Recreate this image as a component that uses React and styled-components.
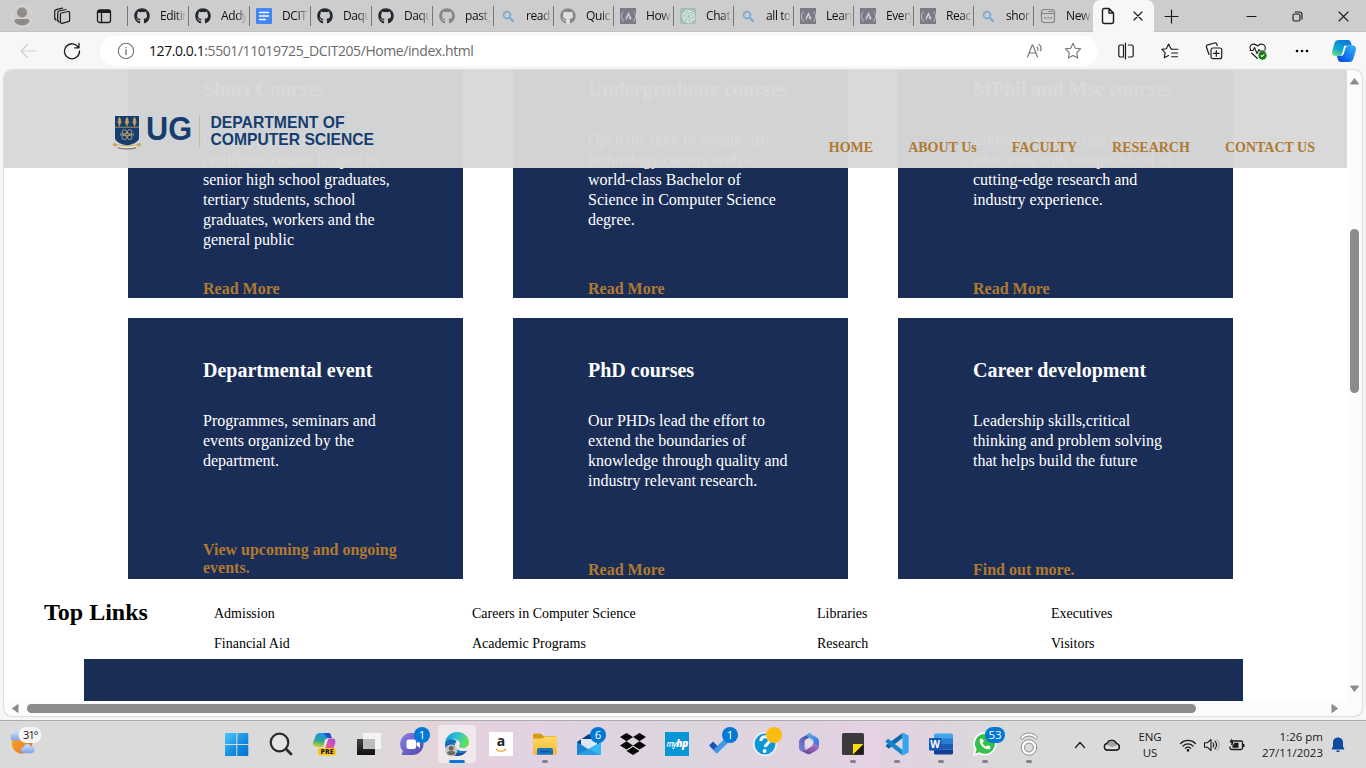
import React from "react";
import styled, { createGlobalStyle, css } from "styled-components";
import { FaGithub, FaDropbox, FaPhoneAlt, FaFreeCodeCamp } from "react-icons/fa";
import { SiOpenai } from "react-icons/si";

const uiFont = '"Open Sans", "Noto Sans", sans-serif';
const pageFont = '"Liberation Serif", "Times New Roman", serif';
const navy = "#1a2d57";
const gold = "#b07a30";

const GlobalStyle = createGlobalStyle`
  * { box-sizing: border-box; }
  body { margin: 0; overflow: hidden; background: #f7f7f7; }
`;

const Desktop = styled.div`
  width: 1366px;
  height: 768px;
  display: flex;
  flex-direction: column;
  overflow: hidden;
  background: #f7f7f7;
  font-family: ${uiFont};
`;

/* ---------- tab strip ---------- */
const TabStrip = styled.div`
  height: 32px;
  flex: none;
  display: flex;
  background: #cdcdcd;
  box-shadow: inset 0 -1px 0 #c2c2c2;
`;

const StripButton = styled.div`
  width: ${(p) => p.$w}px;
  height: 32px;
  flex: none;
  display: flex;
  align-items: center;
  justify-content: center;
`;

const Tab = styled.div`
  width: ${(p) => p.$w}px;
  height: 32px;
  flex: none;
  display: flex;
  align-items: center;
  padding-left: 6px;
  gap: 11px;
  &::before {
    content: "";
    width: 1px;
    height: 20px;
    margin-left: -6px;
    margin-right: -5px;
    background: #777;
  }
`;

const Favicon = styled.span`
  width: 16px;
  height: 16px;
  flex: none;
  display: flex;
  align-items: center;
  justify-content: center;
  border-radius: ${(p) => p.$radius || 0}px;
  background: ${(p) => p.$bg || "transparent"};
  color: ${(p) => p.$color || "#24292f"};
  svg { display: block; }
`;

const TabTitle = styled.span`
  width: 26px;
  margin-left: -1px;
  overflow: hidden;
  white-space: nowrap;
  font-size: 12px;
  line-height: 18px;
  letter-spacing: -0.4px;
  color: #111;
  mask-image: linear-gradient(90deg, #000 60%, transparent 100%);
`;

const ActiveTab = styled.div`
  width: 61px;
  height: 32px;
  flex: none;
  display: flex;
  align-items: center;
  padding-left: 7px;
  gap: 17px;
  background: #f7f7f7;
  border-radius: 7px 7px 0 0;
`;

const Spacer = styled.div`
  flex: 1;
`;

/* ---------- toolbar ---------- */
const Toolbar = styled.div`
  height: 38px;
  flex: none;
  display: flex;
  align-items: center;
  padding-left: 6px;
  background: #f7f7f7;
`;

const ToolCell = styled.div`
  width: ${(p) => p.$w || 44}px;
  height: 38px;
  flex: none;
  display: flex;
  align-items: center;
  justify-content: center;
`;

const AddressBar = styled.div`
  width: 998px;
  height: 30px;
  margin: 0 6px;
  flex: none;
  display: flex;
  align-items: center;
  padding: 0 16px 0 17px;
  border-radius: 15px;
  background: #fff;
`;

const Url = styled.span`
  margin-left: 14px;
  font-size: 14px;
  letter-spacing: -0.42px;
  line-height: 20px;
  white-space: nowrap;
  color: #6b6b6b;
  b { font-weight: 400; color: #111; }
`;

const AddressTools = styled.div`
  margin-left: auto;
  display: flex;
  align-items: center;
  gap: 20px;
`;

/* ---------- viewport ---------- */
const Frame = styled.div`
  width: 1358px;
  height: 646px;
  margin: 0 4px 4px;
  flex: none;
  display: grid;
  grid-template-columns: 1343px 15px;
  grid-template-rows: 631px 15px;
  border-radius: 8px;
  overflow: hidden;
  background: #fcfcfc;
`;

const FrameShadow = styled.div`
  width: 1366px;
  flex: none;
  & > div { box-shadow: 0 0 2px rgba(0, 0, 0, 0.35); }
`;

const Page = styled.div`
  position: relative;
  overflow: hidden;
  background: #fff;
  font-family: ${pageFont};
`;

const SiteHeader = styled.header`
  position: absolute;
  inset: 0 0 auto 0;
  height: 98px;
  display: flex;
  align-items: flex-start;
  justify-content: space-between;
  padding: 44px 32px 0 108px;
  background: rgba(216, 216, 216, 0.974);
`;

const Nav = styled.nav`
  display: flex;
  gap: 35px;
  padding-top: 26px;
`;

const NavLink = styled.a`
  font-size: 14px;
  line-height: 16px;
  font-weight: 700;
  color: ${gold};
`;

const CardGrid = styled.div`
  display: grid;
  grid-template-columns: repeat(3, 335px);
  grid-auto-rows: 261px;
  gap: 20px 50px;
  margin: -33px 0 0 124px;
`;

const Card = styled.article`
  display: flex;
  flex-direction: column;
  padding: 41px 40px ${(p) => p.$bottom || 0}px 75px;
  background: ${navy};
  color: #fff;
`;

const CardTitle = styled.h3`
  margin: 0;
  font-size: 20px;
  line-height: 22px;
  white-space: nowrap;
`;

const CardText = styled.p`
  margin: 30px 0 0;
  font-size: 16px;
  line-height: 20px;
  white-space: pre;
`;

const CardLink = styled.a`
  margin-top: auto;
  font-size: 16px;
  line-height: 18px;
  font-weight: 700;
  white-space: pre;
  color: ${gold};
`;

const TopLinks = styled.section`
  height: 80px;
  display: grid;
  grid-template-columns: 170px 258px 345px 234px 1fr;
  padding: 20px 0 0 40px;
`;

const TopTitle = styled.h2`
  margin: 0;
  font-size: 24px;
  line-height: 27px;
  color: #000;
`;

const LinkColumn = styled.div`
  display: flex;
  flex-direction: column;
  font-size: 14px;
  line-height: 30px;
  color: #000;
  white-space: nowrap;
`;

const NavyBand = styled.div`
  height: 42px;
  margin: 0 104px 0 80px;
  background: ${navy};
`;

const VBar = styled.div`
  display: flex;
  flex-direction: column;
  align-items: center;
  padding: 7px 0 8px;
`;

const HBar = styled.div`
  display: flex;
  align-items: center;
  padding: 0 8px 0 7px;
`;

const Thumb = styled.div`
  flex: none;
  border-radius: 5px;
  background: #8b8b8b;
  ${(p) =>
    p.$vertical
      ? css`width: 9px; height: 164px; margin: 144px 0 auto;`
      : css`height: 9px; width: 1169px; margin: 0 auto 0 8px;`}
`;

/* ---------- taskbar ---------- */
const Taskbar = styled.div`
  height: 48px;
  flex: none;
  display: flex;
  border-top: 1px solid #ababab;
  background: linear-gradient(90deg, #dadada 0, #dadada 360px, #e3d4d8 430px, #e3d1df 490px, #e2d2e3 540px, #dcd5de 680px, #e0d3e0 790px, #e5d1e4 870px, #ded5dd 940px, #dadada 1010px);
`;

const WeatherArea = styled.div`
  width: 215px;
  padding: 6px 0 0 9px;
`;

const AppCell = styled.div`
  position: relative;
  width: 44px;
  height: 47px;
  flex: none;
  display: flex;
  align-items: center;
  justify-content: center;
`;

const AppTile = styled.div`
  width: 38px;
  height: 38px;
  margin-top: -1px;
  display: flex;
  align-items: center;
  justify-content: center;
  border-radius: 4px;
  background: ${(p) => (p.$active ? "#f1e8ee" : "transparent")};
`;

const RunMark = styled.i`
  position: absolute;
  bottom: 5px;
  left: 50%;
  transform: translateX(-50%);
  height: 3px;
  border-radius: 2px;
  width: ${(p) => (p.$active ? 16 : 6)}px;
  background: ${(p) => (p.$active ? "#0a78d4" : "#85808a")};
`;

const Badge = styled.span`
  position: absolute;
  top: 6px;
  right: ${(p) => (p.$wide ? 2 : 5)}px;
  min-width: ${(p) => (p.$wide ? 20 : 16)}px;
  height: 16px;
  border-radius: 8px;
  background: ${(p) => p.$bg || "#0078d4"};
  color: #fff;
  font-size: 11.5px;
  line-height: 16px;
  text-align: center;
`;

const Tray = styled.div`
  flex: 1;
  display: flex;
  align-items: center;
  color: #1b1b1b;
`;

const TrayCell = styled.div`
  width: ${(p) => p.$w}px;
  flex: none;
  display: flex;
  justify-content: center;
`;

const TrayText = styled.div`
  width: ${(p) => p.$w}px;
  flex: none;
  font-size: 11.5px;
  line-height: 16px;
  letter-spacing: ${(p) => p.$ls || 0}px;
  text-align: ${(p) => p.$align || "center"};
  white-space: pre;
`;

/* ---------- drawings ---------- */
const Line = ({ w = 18, h = w, vb, stroke = "#1b1b1b", sw = 1.2, children }) => (
  <svg width={w} height={h} viewBox={vb || `0 0 ${w} ${h}`} fill="none" stroke={stroke} strokeWidth={sw} strokeLinecap="round" strokeLinejoin="round">
    {children}
  </svg>
);

const SearchFav = () => (
  <Line w={16} stroke="#78a9d6" sw={1.6}>
    <circle cx="7" cy="7" r="3.4" />
    <path d="M9.7 9.7 13 13" strokeWidth="2" />
  </Line>
);

const DocFav = () => (
  <Line w={16} stroke="#fff" sw={1.5}>
    <path d="M3 4.5h10M3 8h10M3 11.5h7" strokeLinecap="butt" />
  </Line>
);

const NewFav = () => (
  <Line w={16} stroke="#848484" sw={1.2}>
    <rect x="1.5" y="1.5" width="13" height="13" rx="2.5" />
    <path d="M1.5 5.500h13M8.500 3.500h4" />
    <path d="M5 9.8h.2M8 9.8h.2M11 9.8h.2" strokeWidth="1.8" />
  </Line>
);

const Profile = () => (
  <svg width="22" height="22" viewBox="0 0 22 22">
    <circle cx="11" cy="11" r="10.5" fill="#d0cdc9" stroke="#dcd9d5" />
    <circle cx="11" cy="7.500" r="5" fill="#8f8b88" />
    <path d="M3.500 16.500C3.500 14.500 5 14 6.500 14h9c1.500 0 3 .5 3 2.500C17 19 14 20.500 11 20.500S5 19 3.500 16.500z" fill="#8f8b88" />
  </svg>
);

const Workspaces = () => (
  <Line w={18} sw={1.200}>
    <path d="M8.500 6 15 4.500a1.300 1.300 0 0 1 1.600 1.300v7.400a1.500 1.500 0 0 1-1.200 1.500L9 16.300a1.300 1.300 0 0 1-1.600-1.300V7.500A1.500 1.500 0 0 1 8.500 6z" />
    <path d="M4.700 13.500V6a2 2 0 0 1 1.600-2l6.700-1.500" />
    <path d="M1.700 11.500V4.600a2 2 0 0 1 1.600-2L9.500 1.200" />
    <path d="M1.700 11.500 3 13M4.700 13.500 6 15" />
  </Line>
);

const TabActions = () => (
  <Line w={16} sw={1.3}>
    <rect x="1.500" y="2" width="13" height="12.500" rx="2" />
    <path d="M2 3.500h12" strokeWidth="3" strokeLinecap="butt" />
    <path d="M5.500 5v9" />
  </Line>
);

const PageIcon = () => (
  <Line w={16} h={18} sw={1.400}>
    <path d="M4 1.500h5L13.500 6v8.500a2 2 0 0 1-2 2H4.500a2 2 0 0 1-2-2V3a1.500 1.500 0 0 1 1.500-1.500zM9 1.800V6h4.300" />
  </Line>
);

const Star = ({ lines }) => (
  <Line w={18} stroke={lines ? "#1b1b1b" : "#757575"} sw={1.100}>
    {lines ? (
      <>
        <path d="M11 7 10 6.800 7.600 2 5.300 6.700.8 7.400 4.200 10.700 3.200 15.800 7.600 13.500" />
        <path d="M10.500 7.200h6.500M10.600 11h6M10.600 14.800h6" />
      </>
    ) : (
      <path d="m9 1.300 2.300 4.900 5.300.700-3.900 3.700 1 5.400L9 13.400 4.300 16l1-5.400L1.400 6.900l5.300-.700z" />
    )}
  </Line>
);

const CopilotBlue = () => (
  <svg width="26" height="26" viewBox="0 0 26 26">
    <defs>
      <linearGradient id="cbA" x1="0" y1="1" x2=".6" y2="0"><stop offset="0" stopColor="#7be28a" /><stop offset=".45" stopColor="#12a9c6" /><stop offset="1" stopColor="#0a79dd" /></linearGradient>
      <linearGradient id="cbB" x1="0" y1="1" x2="1" y2="0"><stop offset="0" stopColor="#0a3fe0" /><stop offset=".5" stopColor="#147ef0" /><stop offset="1" stopColor="#38b5f5" /></linearGradient>
    </defs>
    <path d="M18 24H10c-2 0-2.800-1.500-3.200-3l-.9-3.100h3.500c2 0 3-1 3.600-2.800l1.500-5.200c.5-1.500 1.500-2.400 3-2.400h4.300c3 0 3.700 2.600 2.900 5.600l-2.300 7.400C21.800 23 20.500 24 18 24z" fill="url(#cbB)" />
    <path d="M8 2h9c2 0 2.600 1.500 3 3l.8 2.500h-3.300c-2 0-3 1-3.600 2.800l-1.500 5.200c-.5 1.500-1.500 2.400-3 2.400H4.500C1 17.900.7 15 1.500 12l2-7C4.200 3 5.500 2 8 2z" fill="url(#cbA)" />
    <path d="M13 7.800h3.600c-1.500.4-2 1.200-2.500 2.700L12.600 15.600c-.5 1.500-1.200 2.200-2.400 2.300H9c1.200-.3 1.700-1.300 2.100-2.500l1.400-5c.3-1 .4-1.800.5-2.600z" fill="#fff" />
  </svg>
);

const Logo = () => (
  <svg width="266" height="38" viewBox="0 0 266 38">
    <path d="M3 2h24v22c0 4-7 6.500-12 7.500C10 30.500 3 28 3 24z" fill="#153d70" />
    <path d="M3 13.200h24" stroke="#b5975a" strokeWidth=".9" />
    <g fill="#c4a15a">
      <path d="m7.500 2.800 1.700 3-.6.200 1.300 2.400-1.400.4.600 1.700H8v2H7v-2H5.900l.6-1.700-1.400-.4L6.400 6l-.6-.2zM15 2.800l1.700 3-.6.200 1.300 2.400-1.400.4.600 1.700h-1.100v2h-1v-2h-1.100l.6-1.700-1.400-.4L13.900 6l-.6-.2zM22.500 2.800l1.700 3-.6.200 1.300 2.400-1.400.4.600 1.700H23v2h-1v-2h-1.100l.6-1.700-1.400-.4L21.400 6l-.6-.2z" />
    </g>
    <g fill="none" stroke="#a99a74" strokeWidth="1">
      <circle cx="12.300" cy="18" r="2.300" /><circle cx="17.700" cy="18" r="2.300" />
      <circle cx="12.300" cy="23.300" r="2.300" /><circle cx="17.700" cy="23.300" r="2.300" />
      <path d="M8 21.500c3.500-2.500 10.500-2.500 14 0M8 19.500c3.500 3 10.500 3 14 0" />
    </g>
    <path d="M1.500 29.500c4 4.500 23 4.500 27 0" fill="none" stroke="#c6a76a" strokeWidth="3" />
    <path d="M5 32c5 2.200 15 2.200 20 0" fill="none" stroke="#eee5d3" strokeWidth="2.200" />
    <path d="M6 33.700c5 1.700 13 1.700 18 0" fill="none" stroke="#5f5f60" strokeWidth="1" />
    <g fill="#153d70" fontFamily='"Liberation Sans", Arial, sans-serif' fontWeight="700">
      <text x="34" y="26" fontSize="34" textLength="46" lengthAdjust="spacingAndGlyphs">UG</text>
      <text x="98.500" y="14" fontSize="16.500" textLength="134" lengthAdjust="spacingAndGlyphs">DEPARTMENT OF</text>
      <text x="98.500" y="31" fontSize="16.500" textLength="163.500" lengthAdjust="spacingAndGlyphs">COMPUTER SCIENCE</text>
    </g>
    <path d="M87.500 1v32" stroke="#cbbd97" strokeWidth="1" />
  </svg>
);

const ArrowSvg = styled.svg`
  flex: none;
`;

const Arrow = ({ d, w, h }) => (
  <ArrowSvg width={w} height={h} viewBox={`0 0 ${w} ${h}`}>
    <path d={d} fill="#8b8b8b" stroke="#8b8b8b" strokeLinejoin="round" />
  </ArrowSvg>
);

const Weather = () => (
  <svg width="34" height="32" viewBox="0 0 34 32">
    <defs>
      <linearGradient id="sun" x1="0" y1="0" x2="1" y2="1"><stop offset="0" stopColor="#f9b22c" /><stop offset="1" stopColor="#ea6a14" /></linearGradient>
      <linearGradient id="cloud" x1="0" y1="0" x2="0" y2="1"><stop offset="0" stopColor="#d3e2fa" /><stop offset="1" stopColor="#82a5e4" /></linearGradient>
    </defs>
    <circle cx="13" cy="16.500" r="10.300" fill="url(#sun)" />
    <path d="M4.500 13.500a3.500 3.500 0 0 1-.3-6.900 5 5 0 0 1 9.600.4v6.500z" fill="url(#cloud)" />
    <path d="M14.500 26a3.200 3.200 0 0 1-.2-6.300 4.300 4.300 0 0 1 8-.2 3.300 3.300 0 0 1 .3 6.500z" fill="url(#cloud)" stroke="#86a6dc" strokeWidth=".5" />
    <rect x="9.500" y="0" width="23" height="16" rx="8" fill="#f5f5f5" />
    <text x="14" y="12" fontSize="11" letterSpacing="-.9" fill="#222">31°</text>
  </svg>
);

const Windows = () => (
  <svg width="24" height="24" viewBox="0 0 24 24">
    <defs><linearGradient id="win" x1="0" y1="0" x2="1" y2="1"><stop offset="0" stopColor="#4cc8fa" /><stop offset=".6" stopColor="#1189de" /><stop offset="1" stopColor="#0273d0" /></linearGradient></defs>
    <path d="M0 1h11.300v11H0zM12.300 1h11v11h-11zM0 13h11.300v11H0zM12.300 13h11v11h-11z" fill="url(#win)" />
  </svg>
);

const SearchApp = () => (
  <Line w={24} stroke="#2b2b2b" sw={2.200}>
    <circle cx="10.500" cy="10.500" r="8.800" fill="#e4e4e4" />
    <path d="m17 17 5 5" strokeWidth="2.800" />
  </Line>
);

const CopilotPre = () => (
  <svg width="26" height="26" viewBox="0 0 26 26">
    <defs>
      <linearGradient id="cpA" x1=".4" y1="0" x2=".2" y2="1"><stop offset="0" stopColor="#1b8ff0" /><stop offset=".55" stopColor="#2aa88e" /><stop offset="1" stopColor="#e3d22f" /></linearGradient>
      <linearGradient id="cpB" x1="1" y1="0" x2="0" y2="1"><stop offset="0" stopColor="#a24de6" /><stop offset=".6" stopColor="#ea5496" /><stop offset="1" stopColor="#fba44c" /></linearGradient>
    </defs>
    <path d="M8 2h8c2.500 0 3 2 3.600 5H16c-1.500 0-2 1-2.500 2.300L11.500 16H5c-4 0-4.600-3-3.600-5.500l2.200-5.600C4.400 3 5.500 2 8 2z" fill="url(#cpA)" />
    <path d="M12 2h4.500c2 0 2.600 2 3.100 5h-3.200c-1.500 0-3-2-4.400-5z" fill="#1c54c9" />
    <path d="M16.500 7.500H20c3.500 0 4 2.500 3 5.500l-2.500 7H9l3.500-2c1-1.200 1.200-3 1.700-4.500z" fill="url(#cpB)" />
    <path d="M13 8.500h2.500L13.500 16h-2z" fill="#e6e3ea" />
    <rect x="6" y="17" width="18" height="7.500" rx="2" fill="#fcc419" />
    <text x="15" y="23.300" fontSize="7" fontWeight="800" textAnchor="middle" fill="#222">PRE</text>
  </svg>
);

const TaskView = () => (
  <svg width="26" height="24" viewBox="0 0 26 24">
    <defs><linearGradient id="tv" x1="0" y1="0" x2="0" y2="1"><stop offset="0" stopColor="#454545" /><stop offset="1" stopColor="#101010" /></linearGradient></defs>
    <path d="M1 7h18v16H1z" fill="url(#tv)" />
    <path d="M7 1h18v16H7z" fill="#f4f4f4" />
    <path d="M7 7h12v10H7z" fill="#bdbdbd" />
  </svg>
);

const Chat = () => (
  <svg width="26" height="26" viewBox="0 0 26 26">
    <defs><linearGradient id="ch" x1="0" y1="0" x2="1" y2="1"><stop offset="0" stopColor="#8a83e0" /><stop offset="1" stopColor="#4b46b0" /></linearGradient></defs>
    <path d="M12.500 2A11 11 0 0 1 12.500 24H2.500c-1 0-1-1-.5-1.800l1-2A11 11 0 0 1 12.500 2z" fill="url(#ch)" />
    <rect x="6.500" y="8.500" width="9.500" height="9.500" rx="2" fill="#fff" />
    <path d="m16.500 12 3.500-2.500v7.500L16.500 14.500z" fill="#fff" />
  </svg>
);

const Edge = () => (
  <svg width="26" height="26" viewBox="0 0 26 26">
    <defs>
      <linearGradient id="eg1" x1="0" y1="0" x2="1" y2=".3"><stop offset="0" stopColor="#1693dc" /><stop offset=".5" stopColor="#2ac2d6" /><stop offset="1" stopColor="#66dd5a" /></linearGradient>
      <linearGradient id="eg2" x1="0" y1="0" x2="1" y2="1"><stop offset="0" stopColor="#1379c8" /><stop offset="1" stopColor="#123f91" /></linearGradient>
    </defs>
    <path d="M1 12C2 5 7 1 13 1c7 0 12 5 12 10 0 4-3 6-6.500 6-3 0-4-1-3.300-2.200.8-1.300 1-2.300.6-3.300-2-4.500-11-4.500-14.800.5z" fill="url(#eg1)" />
    <path d="M1 13c0 7 5 12 12 12 4 0 8-2 10-5-4 2-10 1.500-12.300-2C9 15.500 10 12.500 12.500 10 8 7 1.500 8 1 13z" fill="url(#eg2)" />
    <path d="M12.800 10.300c-2.500 2.500-2.600 6.200.5 8.200 3.200 2 7 1.600 9.700 1.300-2 2-5 2.500-8 2.200-5-.7-8.500-4.500-7-8.500.8-2 2.800-3 4.800-3.200z" fill="#1b83cc" />
    <circle cx="7.200" cy="19.500" r="6" fill="#c9c5c3" />
    <circle cx="7.200" cy="17.300" r="2.500" fill="#6c6865" />
    <path d="M3.200 22.500c0-2 1-2.600 4-2.600s4 .6 4 2.600c-1.500 2-6.500 2-8 0z" fill="#6c6865" />
  </svg>
);

const AmazonTile = styled.div`
  width: 24px;
  height: 24px;
  display: flex;
  flex-direction: column;
  align-items: center;
  background: #fff;
  color: #222;
  font-weight: 700;
  font-size: 14px;
  line-height: 18px;
  svg { margin-top: -2px; }
`;

const Explorer = () => (
  <svg width="26" height="26" viewBox="0 0 26 26">
    <defs><linearGradient id="ex" x1="0" y1="0" x2="0" y2="1"><stop offset="0" stopColor="#fdd966" /><stop offset="1" stopColor="#f6b82c" /></linearGradient></defs>
    <path d="M1 4a1.500 1.500 0 0 1 1.500-1.500h6L11.500 5h12A1.500 1.500 0 0 1 25 6.500V12H1z" fill="#d99b13" />
    <path d="M1 7.500h9.500l2-2h12.500V22a1.700 1.700 0 0 1-1.700 1.700H2.700A1.700 1.700 0 0 1 1 22z" fill="url(#ex)" />
    <path d="M5 23.700V19a2 2 0 0 1 2-2h12a2 2 0 0 1 2 2v4.700z" fill="#1373c4" />
    <path d="M8.500 20.500h9" stroke="#0c4f94" strokeWidth="1.300" />
  </svg>
);

const Mail = () => (
  <svg width="26" height="26" viewBox="0 0 26 26">
    <path d="M1 11 13 3l12 8v3H1z" fill="#0c3f7e" />
    <path d="M5 8h16v7l-8 4-8-4z" fill="#d9e8f5" />
    <path d="M1 11v13h24V11l-12 8z" fill="#1b8fdf" />
    <path d="M1 24 25 11v13z" fill="#38b8f3" />
    <path d="m1 11 11.500 7L25 24H1z" fill="#1473c9" opacity=".4" />
  </svg>
);

const HpTile = styled.div`
  width: 24px;
  height: 24px;
  background: #0a96d6;
  color: #fff;
  font-size: 8px;
  font-style: italic;
  font-weight: 600;
  line-height: 22px;
  letter-spacing: -0.7px;
  text-align: center;
  white-space: nowrap;
  b { font-size: 10.5px; }
`;

const Todo = () => (
  <svg width="26" height="26" viewBox="0 0 26 26">
    <path d="m1 14.500 4-4L12.500 18l-3.700 4.500z" fill="#1a56b4" />
    <path d="M8.800 22.500 5.300 19 19 5.200l3.800 4z" fill="#3f9be8" />
  </svg>
);

const Help = () => (
  <svg width="26" height="26" viewBox="0 0 26 26">
    <circle cx="13" cy="13" r="11.200" fill="#0c98d6" stroke="#f3f3f3" strokeWidth="1.500" />
    <path d="M8.800 10c.2-6 9.200-5.500 8.500 0-.4 3-3.300 2.500-4.200 6" fill="none" stroke="#fff" strokeWidth="3" />
    <circle cx="12.600" cy="20" r="1.900" fill="#fff" />
  </svg>
);

const M365 = () => (
  <svg width="24" height="26" viewBox="0 0 24 26">
    <defs>
      <linearGradient id="m1" x1="0" y1="1" x2="1" y2="0"><stop offset="0" stopColor="#8187dd" /><stop offset="1" stopColor="#393f91" /></linearGradient>
      <linearGradient id="m2" x1="0" y1="0" x2="1" y2="1"><stop offset="0" stopColor="#53b3ec" /><stop offset="1" stopColor="#4069dc" /></linearGradient>
      <linearGradient id="m3" x1="0" y1="1" x2="1" y2="0"><stop offset="0" stopColor="#563b84" /><stop offset="1" stopColor="#bb7ad5" /></linearGradient>
    </defs>
    <path d="M13.500 2 5 6.500C3 7.500 2 9 2 11v6c0 3 3 4.500 5.500 3L9 19c-1-.8-1.500-2-1.500-3v-5c0-1.500.5-2.300 2-3l4-2z" fill="url(#m1)" />
    <path d="M12 2.300 19 6c2 1 3 2.500 3 4.500v6L16.500 14v-3c0-1.500-.7-2.300-2-3L10 5.500c-.5-2 .6-3 2-3.200z" fill="url(#m2)" />
    <path d="M22 14.500c0 3-.8 4-3 5.200l-5 2.900c-1.500.9-3 .8-4.500 0L3.500 19.500c2 1.200 4 .5 5.500-.5l5-3.500 2.500-3z" fill="url(#m3)" />
    <path d="M8.500 10.500 12 8.300l3.500 2.200v4L12 17l-3.500-2.500z" fill="#e6dde9" />
  </svg>
);

const Sticky = () => (
  <svg width="22" height="22" viewBox="0 0 22 22">
    <rect width="22" height="22" rx="1.500" fill="#3a3a3a" />
    <path d="M11 11h10.500L11 21.500z" fill="#fcdc0b" />
    <path d="M11.500 21.500 21.500 11.500V21.500z" fill="#1d1d1d" />
  </svg>
);

const VsCode = () => (
  <svg width="24" height="24" viewBox="0 0 24 24">
    <path d="M17.500 5.500 3.900 16.300 1.100 14a1 1 0 0 1 0-1.500L17.500.4z" fill="#0c69ae" transform="translate(0 .5)" />
    <path d="M17.500 18 4 7.300a1.200 1.200 0 0 0-1.500 0L1 8.600a1 1 0 0 0 0 1.600l16.500 13.400z" fill="#1585cc" />
    <path d="M17.500.4 22.700 2.900c.8.400 1 .8 1 1.500v15.200c0 .7-.2 1.100-1 1.500l-5.200 2.500z" fill="#33a5ef" />
  </svg>
);

const Word = () => (
  <svg width="26" height="24" viewBox="0 0 26 24">
    <path d="M7 1.500h16.500A1.500 1.500 0 0 1 25 3v4H6V3z" fill="#41a5ee" />
    <path d="M6 6.500h19V12H6z" fill="#2b7cd3" />
    <path d="M6 12h19v5.500H6z" fill="#185abd" />
    <path d="M6 17.500h19V21a1.500 1.500 0 0 1-1.500 1.500H7.500A1.500 1.500 0 0 1 6 21z" fill="#103f91" />
    <rect x="1" y="6" width="12.500" height="12.500" rx="1" fill="#1857b6" />
    <text x="7.200" y="16" fontSize="10" fontWeight="700" textAnchor="middle" fill="#fff">W</text>
  </svg>
);

const WhatsBubble = () => (
  <svg width="26" height="26" viewBox="0 0 26 26">
    <path d="M13 2a10.800 10.800 0 1 1-5.300 20.200L2 24l1.700-5.500A10.800 10.800 0 0 1 13 2z" fill="#35c04a" stroke="#fafafa" strokeWidth="1.800" strokeLinejoin="round" />
    <g transform="translate(7.500 7.500)" color="#fff"><FaPhoneAlt size={11} /></g>
  </svg>
);

const Phone = () => (
  <Line w={24} stroke="#8b8b8b" sw={1}>
    <circle cx="12" cy="15.500" r="7.800" fill="#fff" />
    <circle cx="12" cy="15.500" r="4.500" fill="#dadada" />
    <path d="M3.500 5.500C7-.5 17-.5 20.500 5.500L18.500 7c-3-4-10-4-13 0z" fill="#fff" />
  </Line>
);

const apps = [
  { icon: <Windows /> },
  { icon: <SearchApp /> },
  { icon: <CopilotPre /> },
  { icon: <TaskView /> },
  { icon: <Chat />, badge: "1" },
  { icon: <Edge />, active: true, run: true },
  {
    icon: (
      <AmazonTile>
        a
        <svg width="12" height="5" viewBox="0 0 12 5"><path d="M1 1c3 3 7 3 10 0" fill="none" stroke="#f59b23" strokeWidth="1.500" /></svg>
      </AmazonTile>
    ),
  },
  { icon: <Explorer />, run: true },
  { icon: <Mail />, badge: "6" },
  { icon: <FaDropbox size={26} color="#050505" /> },
  { icon: <HpTile>my<b>hp</b></HpTile> },
  { icon: <Todo />, badge: "1" },
  { icon: <Help />, badge: "", badgeBg: "#fdbd10" },
  { icon: <M365 /> },
  { icon: <Sticky />, run: true },
  { icon: <VsCode />, run: true },
  { icon: <Word />, run: true },
  { icon: <WhatsBubble />, badge: "53", wide: true, run: true },
  { icon: <Phone />, run: true },
];

const gh = (color, bg) => <Favicon $color={color} $bg={bg} $radius={8}><FaGithub size={16} /></Favicon>;
const search = <Favicon><SearchFav /></Favicon>;
const fcc = <Favicon $bg="#7b7b87" $color="#d0d0d4"><FaFreeCodeCamp size={15} /></Favicon>;

const tabs = [
  [61, gh(), "Editing"],
  [61, gh(), "Addy"],
  [61, <Favicon $bg="#4386f5" $radius={1}><DocFav /></Favicon>, "DCIT"],
  [61, gh(), "Daqu"],
  [61, gh(), "Daqu"],
  [61, gh("#858789"), "past_"],
  [60, search, "read"],
  [60, gh("#858789", "#e0e0e0"), "Quic"],
  [60, fcc, "How"],
  [60, <Favicon $bg="#a3c0b6" $color="#eef2f0" $radius={2}><SiOpenai size={13} /></Favicon>, "Chat"],
  [60, search, "all to"],
  [60, fcc, "Learn"],
  [60, fcc, "Every"],
  [60, fcc, "React"],
  [60, search, "shor"],
  [60, <Favicon><NewFav /></Favicon>, "New"],
];

const cards = [
  ["Short Courses", "Our eight weeks\ncertificate course is open to\nsenior high school graduates,\ntertiary students, school\ngraduates, workers and the\ngeneral public", "Read More"],
  ["Undergraduate courses", "Open the door to sought-after\ntechnology careers with a\nworld-class Bachelor of\nScience in Computer Science\ndegree.", "Read More"],
  ["MPhil and Msc courses", "Embrace world class graduate\neducation with unique blend of\ncutting-edge research and\nindustry experience.", "Read More"],
  ["Departmental event", "Programmes, seminars and\nevents organized by the\ndepartment.", "View upcoming and ongoing\nevents."],
  ["PhD courses", "Our PHDs lead the effort to\nextend the boundaries of\nknowledge through quality and\nindustry relevant research.", "Read More"],
  ["Career development", "Leadership skills,critical\nthinking and problem solving\nthat helps build the future", "Find out more."],
];

const linkColumns = [
  ["Admission", "Financial Aid"],
  ["Careers in Computer Science", "Academic Programs"],
  ["Libraries", "Research"],
  ["Executives", "Visitors"],
];

function BrowserTabs() {
  return (
    <TabStrip>
      <StripButton $w={44}><Profile /></StripButton>
      <StripButton $w={36}><Workspaces /></StripButton>
      <StripButton $w={47}><TabActions /></StripButton>
      {tabs.map(([w, icon, title], i) => (
        <Tab key={i} $w={w}>{icon}<TabTitle>{title}</TabTitle></Tab>
      ))}
      <ActiveTab>
        <PageIcon />
        <Line w={10}><path d="m1 1 8 8M9 1 1 9" /></Line>
      </ActiveTab>
      <StripButton $w={34}><Line w={15} sw={1.200}><path d="M7.500 1v13M1 7.500h13" /></Line></StripButton>
      <Spacer />
      <StripButton $w={46}><Line w={11}><path d="M1 5.500h9" /></Line></StripButton>
      <StripButton $w={46}>
        <Line w={11} sw={1.100}><rect x="1" y="3" width="7" height="7" rx="1.500" /><path d="M3.200 1h4.300a2.500 2.500 0 0 1 2.500 2.500V8" /></Line>
      </StripButton>
      <StripButton $w={46}><Line w={11} sw={1.100}><path d="m1 1 9 9M10 1l-9 9" /></Line></StripButton>
    </TabStrip>
  );
}

function BrowserToolbar() {
  return (
    <Toolbar>
      <ToolCell><Line w={18} stroke="#cfcfcf"><path d="M17 9H2M8.500 2.500 2 9l6.500 6.500" /></Line></ToolCell>
      <ToolCell><Line w={18} sw={1.300}><path d="M15.500 5.500A7.500 7.500 0 1 0 16.500 9M16 1.500v4.300h-4.300" /></Line></ToolCell>
      <AddressBar>
        <Line w={18} stroke="#757575" sw={1.100}><circle cx="9" cy="9" r="7.700" /><path d="M9 8v4.500M9 5.500v.2" strokeWidth="1.400" /></Line>
        <Url><b>127.0.0.1</b>:5501/11019725_DCIT205/Home/index.html</Url>
        <AddressTools>
          <Line w={18} stroke="#757575" sw={1.200}><path d="m1.500 15 4.700-12h.6L11.500 15M3 11h7M11 5c1 .8 1.200 2 .9 3.300M13 2.600c2.200 1.600 2.500 4 1.600 6.200" /></Line>
          <Star />
        </AddressTools>
      </AddressBar>
      <ToolCell><Line w={18} sw={1.200}><path d="M6.500 3H3.500A1.700 1.700 0 0 0 1.800 4.700v8.600A1.700 1.700 0 0 0 3.500 15h3M11.500 3h3a1.700 1.700 0 0 1 1.700 1.700v8.600a1.700 1.700 0 0 1-1.700 1.700h-3M6.500 3v12M11.500 3v0M8.500 1v16" /></Line></ToolCell>
      <ToolCell><Star lines /></ToolCell>
      <ToolCell>
        <Line w={18} sw={1.200}>
          <rect x="6" y="6" width="10.700" height="10.700" rx="2" />
          <path d="M11.300 8.500v5.700M8.500 11.300h5.700M4 12.500 1.500 5.200A2 2 0 0 1 2.800 2.800L9.500 1a2 2 0 0 1 2.400 1.400l.3 1.200" />
        </Line>
      </ToolCell>
      <ToolCell>
        <Line w={20} h={18} sw={1.100}>
          <path d="M2.500 7.500C.5 2.500 6 .5 9.500 4 13 .5 18.500 2.500 17 7.500M2 8.500h3l1.500-3 2.500 6 2-4 1 1.500h5M3.500 11l6 5.500" />
          <circle cx="14.500" cy="13.500" r="3.600" fill="#107c10" stroke="#107c10" />
          <path d="m13 13.700 1 1 2-2.200" stroke="#fff" />
        </Line>
      </ToolCell>
      <ToolCell>
        <svg width="14" height="4" viewBox="0 0 14 4"><circle cx="2" cy="2" r="1.300" /><circle cx="7" cy="2" r="1.300" /><circle cx="12" cy="2" r="1.300" /></svg>
      </ToolCell>
      <ToolCell $w={40}><CopilotBlue /></ToolCell>
    </Toolbar>
  );
}

function SitePage() {
  return (
    <Page>
      <CardGrid>
        {cards.map(([title, text, link]) => (
          <Card key={title} $bottom={link.includes("\n") ? 2 : 0}>
            <CardTitle>{title}</CardTitle>
            <CardText>{text}</CardText>
            <CardLink>{link}</CardLink>
          </Card>
        ))}
      </CardGrid>
      <TopLinks>
        <TopTitle>Top Links</TopTitle>
        {linkColumns.map((col) => (
          <LinkColumn key={col[0]}>{col.map((t) => <span key={t}>{t}</span>)}</LinkColumn>
        ))}
      </TopLinks>
      <NavyBand />
      <SiteHeader>
        <Logo />
        <Nav>
          {["HOME", "ABOUT Us", "FACULTY", "RESEARCH", "CONTACT US"].map((t) => <NavLink key={t}>{t}</NavLink>)}
        </Nav>
      </SiteHeader>
    </Page>
  );
}

const TraySvg = styled.svg`
  flex: none;
`;

function SystemTray() {
  return (
    <Tray>
      <TrayCell $w={58}><Line w={12} h={8} sw={1.300}><path d="m1.500 6.500 4.500-5 4.500 5" /></Line></TrayCell>
      <TrayCell $w={6}>
        <TraySvg width="18" height="14" viewBox="0 0 18 14">
          <path d="M4.500 12.200a3.500 3.500 0 0 1-.4-6.900 5 5 0 0 1 9.300.2 3.400 3.400 0 0 1 .2 6.700z" fill="#dedede" stroke="#1b1b1b" strokeWidth="1.200" />
          <path d="M2.500 6.500a5.500 5.500 0 0 1 10.500-1L15 7 9 9z" fill="#a2a2a2" />
          <path d="M4.500 12.200a3.500 3.500 0 0 1-.4-6.900 5 5 0 0 1 9.300.2 3.400 3.400 0 0 1 .2 6.700z" fill="none" stroke="#1b1b1b" strokeWidth="1.200" />
        </TraySvg>
      </TrayCell>
      <TrayText $w={70} $ls={-0.1}>{"ENG\nUS"}</TrayText>
      <TrayCell $w={6}>
        <TraySvg width="18" height="14" viewBox="0 0 18 14" fill="none" stroke="#1b1b1b" strokeWidth="1.200" strokeLinecap="round">
          <path d="M1.500 5.500a10.500 10.500 0 0 1 15 0M4 8a7 7 0 0 1 10 0M6.300 10.300a3.800 3.800 0 0 1 5.400 0" />
          <circle cx="9" cy="12.300" r=".8" fill="#1b1b1b" />
        </TraySvg>
      </TrayCell>
      <TrayCell $w={41}>
        <Line w={17} h={14} sw={1.100}>
          <path d="M1.500 4.800h2.700L8 1.500v11L4.200 9.200H1.500zM10 5c.8 1 .8 3 0 4M12 3.200c1.800 2.200 1.800 5.400 0 7.600" />
          <path d="M14.200 1.500c2.600 3 2.600 8 0 11" stroke="#aaa" />
        </Line>
      </TrayCell>
      <TrayCell $w={9}>
        <TraySvg width="18" height="14" viewBox="0 0 18 14">
          <path d="M6 3h7a1.500 1.500 0 0 1 1.500 1.500v5.500a1.500 1.500 0 0 1-1.500 1.500H3.500A1.500 1.500 0 0 1 2 10V8.500M15.800 6v3" fill="none" stroke="#1b1b1b" strokeWidth="1.300" />
          <path d="M6.500 4.800h4v5h-6V8zM3.500 0v2H6L4.500 7.500 3 7l.5-2.500H1.500z" fill="#1b1b1b" />
        </TraySvg>
      </TrayCell>
      <TrayText $w={82} $align="right">{"1:26 pm\n27/11/2023"}</TrayText>
      <TrayCell $w={30}>
        <svg width="14" height="16" viewBox="0 0 14 16">
          <path d="M7 .5c3 0 5 2.200 5 5V9.500l1.300 2.300c.2.500 0 .8-.4.800H1.100c-.4 0-.6-.3-.4-.8L2 9.500v-4c0-2.800 2-5 5-5zM5 13.500h4c-.3 2-3.700 2-4 0z" fill="#0b4aa2" />
        </svg>
      </TrayCell>
    </Tray>
  );
}

export default function App() {
  return (
    <Desktop>
      <GlobalStyle />
      <BrowserTabs />
      <BrowserToolbar />
      <FrameShadow>
        <Frame>
          <SitePage />
          <VBar>
            <Arrow w={11} h={8} d="M1.500 7 5.500 1.500 9.500 7z" />
            <Thumb $vertical />
            <Arrow w={11} h={8} d="M1.500 1h8L5.500 6.500z" />
          </VBar>
          <HBar>
            <Arrow w={8} h={11} d="M7 1.500v8L1.500 5.500z" />
            <Thumb />
            <Arrow w={8} h={11} d="M1 1.500v8L6.500 5.500z" />
          </HBar>
        </Frame>
      </FrameShadow>
      <Taskbar>
        <WeatherArea><Weather /></WeatherArea>
        {apps.map((a, i) => (
          <AppCell key={i}>
            <AppTile $active={a.active}>{a.icon}</AppTile>
            {a.badge !== undefined && <Badge $wide={a.wide} $bg={a.badgeBg}>{a.badge}</Badge>}
            {a.run && <RunMark $active={a.active} />}
          </AppCell>
        ))}
        <SystemTray />
      </Taskbar>
    </Desktop>
  );
}
